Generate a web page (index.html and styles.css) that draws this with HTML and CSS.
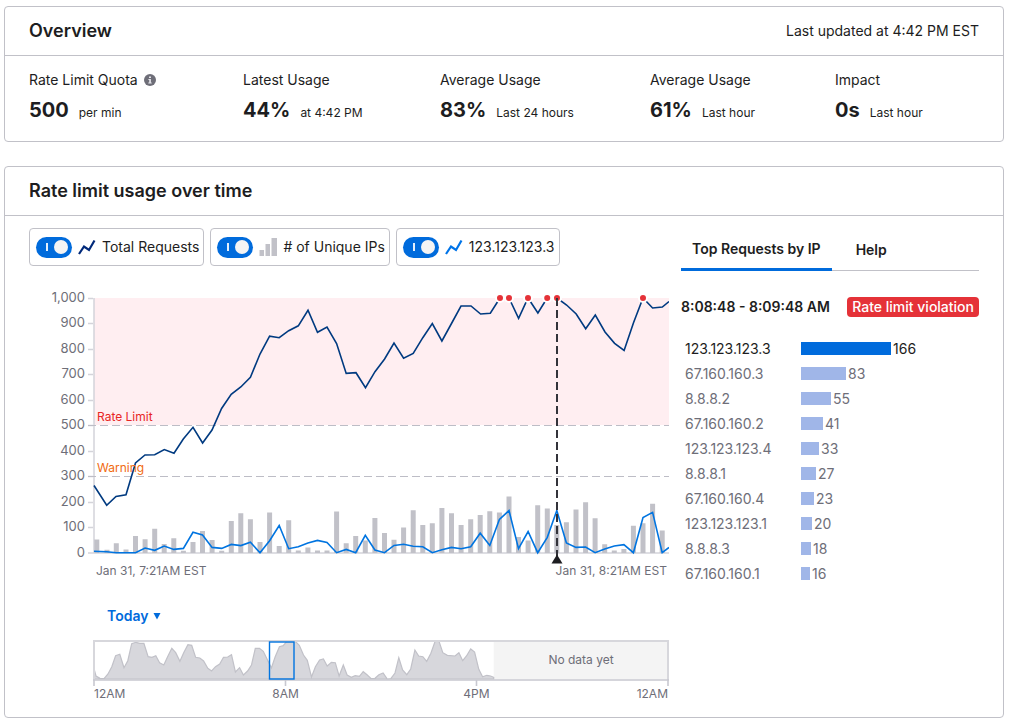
FILE: index.html
```
<!DOCTYPE html>
<html lang="en">
<head>
<meta charset="utf-8">
<meta name="viewport" content="width=device-width, initial-scale=1">
<title>Rate limit overview</title>
<link rel="stylesheet" href="styles.css">
</head>
<body>
<main class="page">
  <section class="card">
    <header class="card-header">
      <h2 class="card-title">Overview</h2>
      <p class="updated">Last updated at 4:42 PM EST</p>
    </header>
    <div class="stats">
      <div class="stat">
        <div class="stat-label">Rate Limit Quota
          <svg class="info" viewBox="0 0 12 12" aria-hidden="true"><circle cx="6" cy="6" r="6" fill="#6e6e78"/><path d="M5 2.4h2v1.6H5zM4.4 5h2.5v3.4h.8v1H4.3v-1h.9V6h-.8z" fill="#e4e4ea"/></svg>
        </div>
        <div class="stat-line"><strong class="stat-value">500</strong><span class="stat-note">per min</span></div>
      </div>
      <div class="stat">
        <div class="stat-label">Latest Usage</div>
        <div class="stat-line"><strong class="stat-value">44%</strong><span class="stat-note">at 4:42 PM</span></div>
      </div>
      <div class="stat">
        <div class="stat-label">Average Usage</div>
        <div class="stat-line"><strong class="stat-value">83%</strong><span class="stat-note">Last 24 hours</span></div>
      </div>
      <div class="stat">
        <div class="stat-label">Average Usage</div>
        <div class="stat-line"><strong class="stat-value">61%</strong><span class="stat-note">Last hour</span></div>
      </div>
      <div class="stat">
        <div class="stat-label">Impact</div>
        <div class="stat-line"><strong class="stat-value">0s</strong><span class="stat-note">Last hour</span></div>
      </div>
    </div>
  </section>

  <section class="card">
    <header class="card-header">
      <h2 class="card-title">Rate limit usage over time</h2>
    </header>
    <div class="usage">
      <div class="usage-chart">
        <div class="toggles">
          <label class="toggle">
            <input class="switch" type="checkbox" checked>
            <svg class="series-icon" viewBox="0 0 18 18" aria-hidden="true"><path d="M1 16 6 8.5l5 3.5 5.5-9.5" fill="none" stroke="#00297a" stroke-width="2.2"/></svg>
            <span>Total Requests</span>
          </label>
          <label class="toggle">
            <input class="switch" type="checkbox" checked>
            <svg class="series-icon" viewBox="0 0 18 18" aria-hidden="true"><path d="M.5 12H5v6H.5zM6.500 6H11v12H6.500zM12.500 0H18v18h-5.500z" fill="#c1c1c8"/></svg>
            <span># of Unique IPs</span>
          </label>
          <label class="toggle">
            <input class="switch" type="checkbox" checked>
            <svg class="series-icon" viewBox="0 0 18 18" aria-hidden="true"><path d="M1 16 6 8.5l5 3.5 5.5-9.5" fill="none" stroke="#0074e8" stroke-width="2.2"/></svg>
            <span>123.123.123.3</span>
          </label>
        </div>

        <svg class="plot" viewBox="29 282 640 306" role="img" aria-label="Requests per minute">
          <rect x="94" y="298" width="575" height="127" fill="#ffeef1"/>
          <path d="M94 298V553.500M88 298.500h5M88 323.500h5M88 349.500h5M88 374.500h5M88 400.500h5M88 425.500h5M88 451.500h5M88 476.500h5M88 502.500h5M88 527.500h5M88 553H669" fill="none" stroke="#d4d4da" stroke-width="1.500"/>
          <path d="M88 425.500H669M88 476.500H669" fill="none" stroke="#bdbdc6" stroke-dasharray="8 4"/>
          <g class="axis-text" text-anchor="end">
            <text x="85" y="302">1,000</text><text x="85" y="327">900</text><text x="85" y="353">800</text><text x="85" y="378">700</text><text x="85" y="404">600</text><text x="85" y="429">500</text><text x="85" y="455">400</text><text x="85" y="480">300</text><text x="85" y="506">200</text><text x="85" y="531">100</text><text x="85" y="557">0</text>
          </g>
          <path fill="none" stroke="#c1c1c8" stroke-width="5" d="M96.800 553V539.500M107 553V549.700M116.300 553V543.300M126 553V549.500M135.500 553V536M145.100 553V539.300M154.700 553V528.800M164.200 553V544M173.800 553V538.300M183.400 553V550.700M193 553V542M202.500 553V531M212.100 553V540M221.700 553V550.700M231.300 553V521M240.800 553V513.300M250.400 553V519.300M260 553V542M269.600 553V512.500M279.200 553V546M288.700 553V520.300M298.300 553V550.400M307.900 553V547.400M317.500 553V550.400M327 553V550.400M336.600 553V511.600M346.200 553V543.200M355.700 553V536M365.300 553V540.600M374.900 553V518M384.500 553V533M394 553V539.800M403.600 553V527.400M413.200 553V510.200M422.800 553V525M432.300 553V523.300M441.900 553V508M451.500 553V513.300M461.100 553V525M470.700 553V519.300M480.200 553V515M489.800 553V511.200M499.400 553V512.400M509 553V496.600M518.500 553V537M528.100 553V540.400M537.700 553V505.200M547.300 553V508.600M556.800 553V525M566.400 553V522.200M576 553V509.600M585.600 553V502.300M595.100 553V518.300M604.700 553V544.300M614.300 553V550.400M623.900 553V549M633.400 553V525.700M643 553V523.300M652.600 553V503.800M662.200 553V530.400"/>
          <polyline fill="none" stroke="#003a80" stroke-width="1.600" points="94,485.500 106.700,505.300 116,496.500 126,494.700 135.500,463 145,455 154.700,454.800 164.300,449.600 174,453.200 183.300,439 193,427.300 202.600,443 212,430 221.600,408.500 231.200,394.300 240.800,387 250.400,377.300 260,354 269.600,336.200 279.200,337.700 288.700,330.700 298.300,325.800 308,310.300 317.500,332.300 327,327 336.600,343.500 346.200,373.400 356,372.700 365.500,387.700 375,371.700 384.600,359 394,343 403.600,358.200 413.200,353.400 422.800,337.700 432.300,323.500 441.900,341 451.500,323.500 461,306 471,306 480.600,314 490.300,313.300 500,298"/>
          <polyline fill="none" stroke="#003a80" stroke-width="1.600" points="509,298 518.600,318.300 528,298 537.900,313 547.200,298"/>
          <polyline fill="none" stroke="#003a80" stroke-width="1.600" points="557,298 566.600,305 576.200,314 585.700,328.700 595.300,315 605,332 614.600,343.300 624.100,350.500 633.600,322.500 643,298 652.600,308 662.300,307 669,301.500"/>
          <polyline fill="none" stroke="#0074e0" stroke-width="1.600" points="94,551.300 106.700,551.700 116.300,552.700 135.500,552.700 145.100,548 154.700,550.300 164.200,546 173.800,549.400 183.400,548.400 193,532.300 202.500,535 212.100,547.400 221.700,548.400 231.300,544.400 240.800,545.600 250.400,542.300 260,552.700 269.600,540.700 279.200,525.500 288.700,548.700 298.300,546.700 307.900,543 317.500,540.400 327,542.500 336.600,552.700 346.200,549.400 355.700,552.700 365.300,535.400 374.900,550 384.500,552.700 394,545.400 403.600,544.300 413.200,546.300 422.800,546.700 432.300,552.700 441.900,549.700 451.500,547.400 461.100,548.700 470.700,546.700 480.200,533.200 489.800,545.500 499.400,519.500 509,510.600 518.500,548.600 528.100,531.500 537.700,552.700 547.300,537.300 556.800,510.600 566.400,543 576,547.400 585.600,547 595.100,552.700 604.700,549 614.300,546 623.900,544.600 633.400,552.700 643,517.600 652.600,512.400 662.200,552.700 669,547.500"/>
          <g fill="#e53238" stroke="#fff" stroke-width="2">
            <circle cx="500" cy="298" r="4"/><circle cx="509" cy="298" r="4"/><circle cx="528" cy="298" r="4"/><circle cx="547.200" cy="298" r="4"/><circle cx="557" cy="298" r="4"/><circle cx="643" cy="298" r="4"/>
          </g>
          <path d="M557 298V556" stroke="#33333a" stroke-width="2" stroke-dasharray="8 4"/>
          <path d="M551.500 563.500h11L557 554.500z" fill="#1d1d21"/>
          <text class="limit-text" x="97" y="421">Rate Limit</text>
          <text class="warning-text" x="97" y="472">Warning</text>
          <text class="small-text" x="96" y="575">Jan 31, 7:21AM EST</text>
          <text class="small-text" x="667" y="575" text-anchor="end">Jan 31, 8:21AM EST</text>
        </svg>

        <div class="period">
          <select class="period-select" aria-label="Period"><option>Today</option></select>
          <svg class="caret" viewBox="0 0 8 8" aria-hidden="true"><path d="M.5 1h7L4 7.500z" fill="#006bdc"/></svg>
        </div>

        <svg class="brush" viewBox="29 636 640 65" role="img" aria-label="Requests for the whole day">
          <rect x="493.700" y="641" width="174" height="38" fill="#f4f4f4"/>
          <polygon fill="#d7d7dc" points="94,679 94.200,669.300 96,676 100,678.300 104,678.700 108,674 111.800,666.700 115.600,655.700 119.800,654.300 124,667.700 127.800,660.700 131.700,643.700 135.900,642.300 139.700,643.300 143.900,643.300 148.100,656.700 152,657.300 155.800,655.700 159.600,662.700 163.800,665 167.600,656.700 171.800,648.300 175.700,652.700 179.900,661.300 183.700,652.700 187.900,644.700 191.700,645.300 195.600,657.300 199.800,658 203.600,661 207.800,668.300 211.600,671 215.500,666.700 219.700,664 223.500,657.300 227.700,657 231.500,654.700 235.400,672 239.600,667.700 243.400,675 247.600,671 251.500,665 255.300,648.300 259.500,648.300 263.300,651.300 267.500,660 271.400,668 275.200,656.700 279.400,646.700 283.200,645.700 286.700,641.700 295.500,641.500 299.300,645.300 303.500,655 307.300,660.300 311.500,677 315.400,666.700 319.600,660 323.400,659 327.200,666 331.400,662.300 335.300,662.700 339.100,676 343.300,665 347.100,675 351.300,677.300 355.200,675.700 359.400,676.300 363.200,671.700 367,674.700 371.200,678.700 375,678.300 378.900,674.700 383.100,673 387.300,679 390.800,678.700 395,673 398.800,657.700 402.600,670 406.800,674.700 410.700,669 414.900,650 418.700,656 422.900,656.700 426.700,661.300 430.900,653.300 435.100,641.300 439,641.300 442.800,652.700 447.400,655.300 455,656 458.900,652.700 462.700,660.700 466.500,656 470.700,649 474.600,652 478.800,669.300 482.600,676.700 486.800,675.300 490.600,676 493.700,677.300 493.700,679" stroke="#c1c1c8" stroke-width="1.200"/>
          <path d="M94 680V641H668V680" fill="none" stroke="#d7d7dc" stroke-width="2"/>
          <path d="M93 680H669M94 680v6M285.500 680v6M476.500 680v6M668 680v6" fill="none" stroke="#c8c8d0" stroke-width="1.600"/>
          <rect x="269.500" y="642" width="24.500" height="37" fill="none" stroke="#0074e0" stroke-width="1.400"/>
          <text class="small-text" x="581" y="664" text-anchor="middle">No data yet</text>
          <text class="small-text" x="94" y="698">12AM</text>
          <text class="small-text" x="285.500" y="698" text-anchor="middle">8AM</text>
          <text class="small-text" x="476.500" y="698" text-anchor="middle">4PM</text>
          <text class="small-text" x="668" y="698" text-anchor="end">12AM</text>
        </svg>
      </div>

      <aside class="requests">
        <div class="tabs" role="tablist">
          <button class="tab tab-active" type="button" role="tab" aria-selected="true">Top Requests by IP</button>
          <button class="tab" type="button" role="tab" aria-selected="false">Help</button>
        </div>
        <div class="range">
          <h3 class="range-title">8:08:48 - 8:09:48 AM</h3>
          <span class="badge">Rate limit violation</span>
        </div>
        <table class="ips">
          <tbody>
            <tr class="ip-current"><th scope="row">123.123.123.3</th><td><div class="ip-count"><span class="bar" style="width:90px"></span>166</div></td></tr>
            <tr><th scope="row">67.160.160.3</th><td><div class="ip-count"><span class="bar" style="width:45px"></span>83</div></td></tr>
            <tr><th scope="row">8.8.8.2</th><td><div class="ip-count"><span class="bar" style="width:30px"></span>55</div></td></tr>
            <tr><th scope="row">67.160.160.2</th><td><div class="ip-count"><span class="bar" style="width:22px"></span>41</div></td></tr>
            <tr><th scope="row">123.123.123.4</th><td><div class="ip-count"><span class="bar" style="width:18px"></span>33</div></td></tr>
            <tr><th scope="row">8.8.8.1</th><td><div class="ip-count"><span class="bar" style="width:15px"></span>27</div></td></tr>
            <tr><th scope="row">67.160.160.4</th><td><div class="ip-count"><span class="bar" style="width:13px"></span>23</div></td></tr>
            <tr><th scope="row">123.123.123.1</th><td><div class="ip-count"><span class="bar" style="width:11px"></span>20</div></td></tr>
            <tr><th scope="row">8.8.8.3</th><td><div class="ip-count"><span class="bar" style="width:10px"></span>18</div></td></tr>
            <tr><th scope="row">67.160.160.1</th><td><div class="ip-count"><span class="bar" style="width:9px"></span>16</div></td></tr>
          </tbody>
        </table>
      </aside>
    </div>
  </section>
</main>
</body>
</html>
```
FILE: styles.css
```
* {
  box-sizing: border-box;
}

body {
  margin: 0;
  background: #fff;
  color: #1d1d21;
  font: 14px/20px Inter, "Liberation Sans", sans-serif;
}

h2, h3, p {
  margin: 0;
}

.page {
  display: flex;
  flex-direction: column;
  gap: 24px;
  padding: 6px 7px 8px 4px;
}

.card {
  border: 1px solid #c1c1c8;
  border-radius: 4px;
}

.card-header {
  display: flex;
  align-items: center;
  justify-content: space-between;
  height: 49px;
  padding: 0 24px;
  border-bottom: 1px solid #c1c1c8;
}

.card-title {
  font-size: 18px;
  font-weight: 600;
  line-height: 24px;
}

.stats {
  display: grid;
  grid-template-columns: 214fr 197fr 210fr 185fr 144fr;
  padding: 14px 24px 16px;
}

.stat-label {
  display: flex;
  align-items: center;
  gap: 6px;
}

.info {
  width: 12px;
  height: 12px;
}

.stat-line {
  display: flex;
  align-items: baseline;
  gap: 10px;
  margin-top: 5px;
}

.stat-value {
  font-size: 20px;
  font-weight: 700;
  line-height: 30px;
}

.stat-note {
  font-size: 12px;
}

.usage {
  display: grid;
  grid-template-columns: minmax(0, 640fr) minmax(0, 298fr);
  column-gap: 12px;
  padding: 12px 24px 16px;
}

.toggles {
  display: flex;
  gap: 6px;
}

.toggle {
  display: flex;
  align-items: center;
  gap: 6px;
  height: 38px;
  padding: 0 4px 0 6px;
  border: 1px solid #c1c1c8;
  border-radius: 4px;
  white-space: nowrap;
}

.switch {
  appearance: none;
  display: flex;
  align-items: center;
  justify-content: space-between;
  width: 36px;
  height: 21px;
  margin: 0;
  padding: 0 4px 0 10px;
  border-radius: 11px;
  background: #006bdc;
}

.switch::before {
  content: "";
  width: 2px;
  height: 8px;
  background: #e4f0fc;
}

.switch::after {
  content: "";
  width: 14px;
  height: 14px;
  border-radius: 50%;
  background: #f4f4f4;
}

.series-icon {
  width: 18px;
  height: 18px;
}

.plot {
  display: block;
  width: 100%;
  margin-top: 16px;
}

.plot text,
.brush text {
  font-family: Inter, "Liberation Sans", sans-serif;
  font-size: 12px;
}

.plot .axis-text text {
  font-size: 13px;
  fill: #6e6e78;
}

.small-text {
  fill: #6e6e78;
}

.limit-text {
  fill: #e72525;
}

.warning-text {
  fill: #f16a10;
}

.period {
  display: flex;
  align-items: center;
  gap: 4px;
  height: 24px;
  margin-top: 16px;
  padding-left: 78px;
}

.period-select {
  appearance: none;
  margin: 0;
  padding: 0;
  border: 0;
  background: none;
  color: #006bdc;
  font: inherit;
  font-weight: 600;
}

.caret {
  width: 8px;
  height: 8px;
}

.brush {
  display: block;
  width: 100%;
  margin-top: 8px;
}

.tabs {
  display: flex;
  height: 43px;
  border-bottom: 1px solid #c1c1c8;
}

.tab {
  height: 43px;
  padding: 0 24px;
  border: 0;
  background: none;
  color: #1d1d21;
  font: inherit;
  font-weight: 600;
}

.tab-active {
  padding: 2px 11px 0;
  border-bottom: 3px solid #006bdc;
}

.range {
  display: flex;
  align-items: center;
  justify-content: space-between;
  margin-top: 26px;
  white-space: nowrap;
}

.range-title {
  font-size: 14px;
  font-weight: 600;
}

.badge {
  padding: 0 5px;
  border-radius: 4px;
  background: #e53238;
  color: #fff;
  font-weight: 500;
}

.ips {
  width: 100%;
  margin-top: 19px;
  border-collapse: collapse;
  table-layout: fixed;
  color: #6e6e78;
}

.ips th {
  width: 120px;
  height: 25px;
  padding: 0 0 0 4px;
  font-weight: 400;
  text-align: left;
}

.ips td {
  padding: 0;
}

.ip-count {
  display: flex;
  align-items: center;
  gap: 2px;
}

.bar {
  height: 13px;
  background: #a0b6e8;
}

.ip-current {
  color: #1d1d21;
}

.ip-current .bar {
  background: #006bdc;
}
```
